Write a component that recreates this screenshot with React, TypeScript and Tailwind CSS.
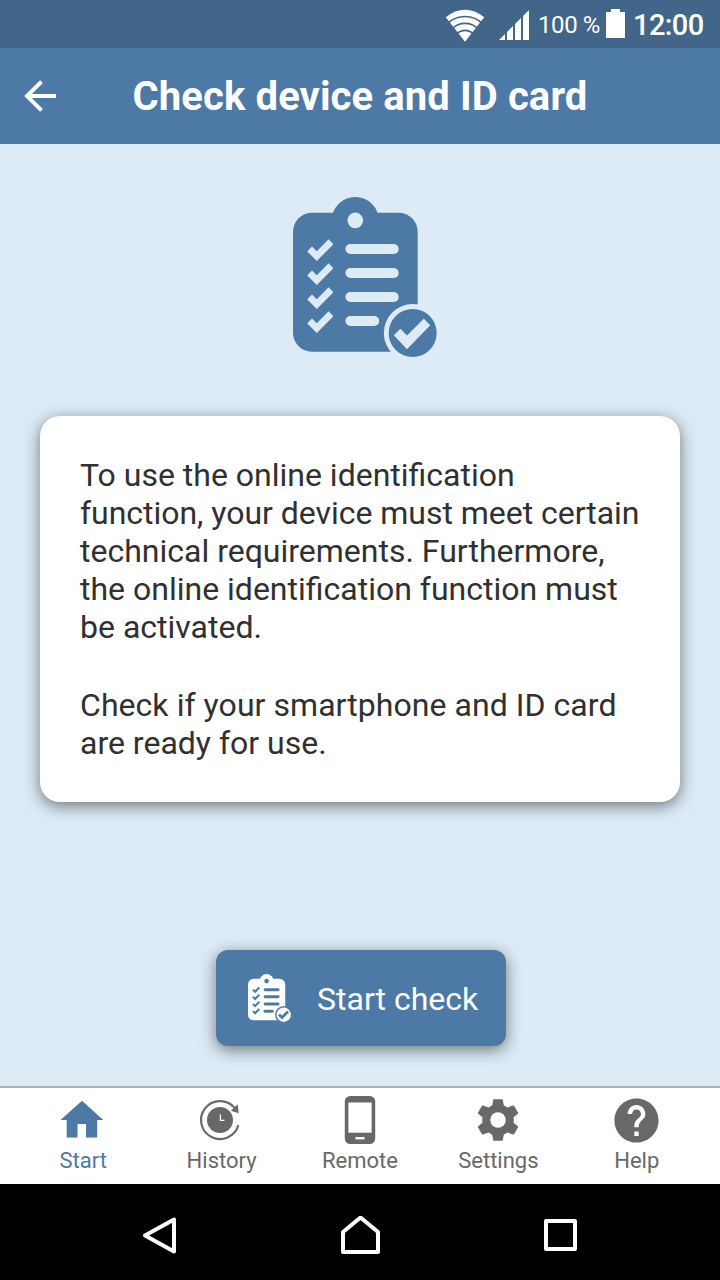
import React from "react";

const TICK_ROWS = [0, 24, 48, 72];

function Checklist({ className, cut }: { className: string; cut: string }) {
  return (
    <svg viewBox="13 12 144 160" className={className} fill="currentColor">
      <rect x="13" y="27.8" width="124.7" height="139" rx="19" />
      <circle cx="75.3" cy="35.7" r="23.7" />
      <g fill={cut} stroke="none">
        <circle cx="75.3" cy="35.4" r="7.8" />
        {TICK_ROWS.map((dy) => (
          <g key={dy} transform={`translate(0 ${dy})`}>
            <polygon points="27.2,66.4 32,61.5 36.8,66.2 48.6,54.3 53.4,59.2 36.8,76" />
            <rect x="65.4" y="59" width={dy === 72 ? 33.8 : 53.3} height="10" rx="5" />
          </g>
        ))}
        <circle cx="132.7" cy="148" r="28.9" />
      </g>
      <circle cx="132.7" cy="148" r="24" />
      <polygon
        fill={cut}
        points="113.8,150.2 120.4,143.8 127,150.4 143.8,133.8 150.2,140.3 127,164.3"
      />
    </svg>
  );
}

function StatusBar() {
  return (
    <div className="flex h-12 shrink-0 items-center bg-[#426689] pl-[445px] text-white">
      <svg viewBox="0 0 40 34" className="mt-0.5 h-[34px] w-10" fill="white">
        <path d="M.8 9.2Q20-5.6 39.2 9.2L20 33.8Z" />
        <g fill="none" stroke="#426689" strokeWidth="1.7">
          <circle cx="20" cy="33.7" r="25.2" />
          <circle cx="20" cy="33.7" r="18.3" />
          <circle cx="20" cy="33.7" r="11.4" />
        </g>
      </svg>
      <svg viewBox="0 0 30 30" className="ml-3.5 mt-0.5 h-[30px] w-[30px]" fill="white">
        <path d="M0 30L6 24V30ZM8 30V22L14 16V30ZM16 30V14L22 8V30ZM24 30V6L30 0V30Z" />
      </svg>
      <span className="ml-[9px] mt-0.5 w-[68px] whitespace-nowrap text-[24px] leading-none tracking-[-0.4px]">
        100 %
      </span>
      <svg viewBox="0 0 19 29" className="-mt-0.5 h-[29px] w-[19px]" fill="white">
        <path d="M0 3H5V0H14V3H19V29H0Z" />
      </svg>
      <span className="ml-2 mt-0.5 text-[29px] font-medium leading-none tracking-[-0.6px]">12:00</span>
    </div>
  );
}

function Header() {
  return (
    <header className="flex h-24 shrink-0 items-center bg-[#4c79a5] text-white">
      <svg viewBox="0 0 32 32" className="ml-6 h-8 w-8" fill="none" stroke="white" strokeWidth="4">
        <path d="M32 16H3M17.5 1.6L3 16L17.5 30.4" />
      </svg>
      <h1 className="mr-14 mt-0.5 flex-1 text-center text-[40px] font-bold leading-none tracking-[0.1px]">
        Check device and ID card
      </h1>
    </header>
  );
}

function HomeIcon() {
  return (
    <svg viewBox="0 0 48 48" className="h-12 w-12" fill="currentColor">
      <path d="M23 4.7L44.3 24H38.2V41.5H27V28H18.5V41.5H7.7V24H1.5Z" />
    </svg>
  );
}

function HistoryIcon() {
  return (
    <svg viewBox="1 0 48 48" className="h-12 w-12" fill="currentColor">
      <path d="M41.3 29.3A19 19 0 1 1 37.4 11.6" fill="none" stroke="currentColor" strokeWidth="2.2" />
      <path d="M40.8 8.2L41.6 17.3L33.8 14.8Z" />
      <circle cx="23" cy="24" r="13" />
      <path d="M23.4 18.4V24.3H27.4" fill="none" stroke="white" strokeWidth="1.3" />
    </svg>
  );
}

function PhoneIcon() {
  return (
    <svg viewBox="0 0 48 48" className="h-12 w-12" fill="currentColor">
      <rect x="8.8" y="0" width="30.4" height="48" rx="5.5" />
      <rect x="12.4" y="6.5" width="23.2" height="30.2" fill="white" />
      <rect x="19.5" y="41" width="9" height="2.4" fill="white" />
    </svg>
  );
}

function GearIcon() {
  return (
    <svg viewBox="0 0 42 42" className="h-[42px] w-[42px]" fill="currentColor">
      <path
        stroke="currentColor"
        strokeWidth="1"
        strokeLinejoin="round"
        d="M16.6.8H25.4L26.3 6.6Q28.6 7.5 30.5 9L36.6 6.8L40.8 14.2L36 18.2Q36.4 21 36 23.8L40.8 27.8L36.6 35.2L30.5 33Q28.6 34.5 26.3 35.4L25.4 41.2H16.6L15.7 35.4Q13.4 34.5 11.5 33L5.4 35.2L1.2 27.8L6 23.8Q5.6 21 6 18.2L1.2 14.2L5.4 6.8L11.5 9Q13.4 7.5 15.7 6.6Z"
      />
      <circle cx="21" cy="21" r="7.8" fill="white" />
    </svg>
  );
}

function HelpIcon() {
  return (
    <svg viewBox="0 0 24 24" className="-ml-px h-[53px] w-[53px] shrink-0" fill="currentColor">
      <path d="M12 2C6.48 2 2 6.48 2 12s4.48 10 10 10 10-4.48 10-10S17.52 2 12 2zm1 17h-2v-2h2v2zm2.07-7.75l-.9.92C13.45 12.9 13 13.5 13 15h-2v-.5c0-1.1.45-2.1 1.17-2.83l1.24-1.26c.37-.36.59-.86.59-1.41 0-1.1-.9-2-2-2s-2 .9-2 2H8c0-2.21 1.79-4 4-4s4 1.79 4 4c0 .88-.36 1.68-.93 2.25z" />
    </svg>
  );
}

const TABS = [
  { label: "Start", icon: <HomeIcon />, active: true },
  { label: "History", icon: <HistoryIcon />, active: false },
  { label: "Remote", icon: <PhoneIcon />, active: false },
  { label: "Settings", icon: <GearIcon />, active: false },
  { label: "Help", icon: <HelpIcon />, active: false },
];

function TabBar() {
  return (
    <nav className="grid h-[98px] shrink-0 grid-cols-5 border-t-2 border-[#b0b3b6] bg-white px-[14px]">
      {TABS.map((tab) => (
        <div
          key={tab.label}
          className={`flex flex-col items-center ${tab.active ? "text-[#4c79a5]" : "text-[#686868]"}`}
        >
          <div className="mt-2 flex h-12 items-center justify-center">{tab.icon}</div>
          <span className="mt-1 text-[22px] leading-[26px]">{tab.label}</span>
        </div>
      ))}
    </nav>
  );
}

function SystemBar() {
  return (
    <div className="flex h-24 shrink-0 items-center justify-between bg-black px-[140px]">
      <svg viewBox="0 0 40 40" className="mt-2 h-10 w-10" fill="none" stroke="white" strokeWidth="4" strokeLinejoin="round">
        <path d="M34 3.5V35.5L5 19.5Z" />
      </svg>
      <svg viewBox="0 0 40 40" className="mt-2 h-10 w-10" fill="none" stroke="white" strokeWidth="4" strokeLinejoin="round">
        <path d="M3 36V16L20.5 1.5L38 16V36Z" />
      </svg>
      <svg viewBox="0 0 40 40" className="mt-2 h-10 w-10" fill="none" stroke="white" strokeWidth="4" strokeLinejoin="round">
        <path d="M6 5H35V33H6Z" />
      </svg>
    </div>
  );
}

export default function App() {
  return (
    <div className="flex h-[1280px] w-[720px] flex-col overflow-hidden bg-[#ddebf6] font-['Roboto',sans-serif]">
      <StatusBar />
      <Header />
      <main className="flex flex-1 flex-col items-center">
        <Checklist className="mr-[-10px] mt-[53px] h-40 w-36 text-[#4c79a5]" cut="#ddebf6" />
        <section className="mt-[59px] w-[640px] whitespace-nowrap rounded-[20px] bg-white p-10 text-[32px] leading-[38px] text-[#303030] shadow-[0_4px_16px_rgba(0,0,0,0.5)]">
          <p>
            To use the online identification
            <br />
            <span className="tracking-[-0.03px]">function, your device must meet certain</span>
            <br />
            technical requirements. Furthermore,
            <br />
            the online identification function must
            <br />
            be activated.
          </p>
          <p className="mt-10">
            <span className="tracking-[0.05px]">Check if your smartphone and ID card</span>
            <br />
            are ready for use.
          </p>
        </section>
        <button className="ml-0.5 mt-[148px] flex h-24 w-[290px] items-center rounded-xl bg-[#4c79a5] pl-8 text-[32px] text-white shadow-[0_4px_16px_rgba(0,0,0,0.5)]">
          <Checklist className="h-12 w-[43px]" cut="#4c79a5" />
          <span className="ml-[26px] mt-0.5 whitespace-nowrap">Start check</span>
        </button>
      </main>
      <TabBar />
      <SystemBar />
    </div>
  );
}
